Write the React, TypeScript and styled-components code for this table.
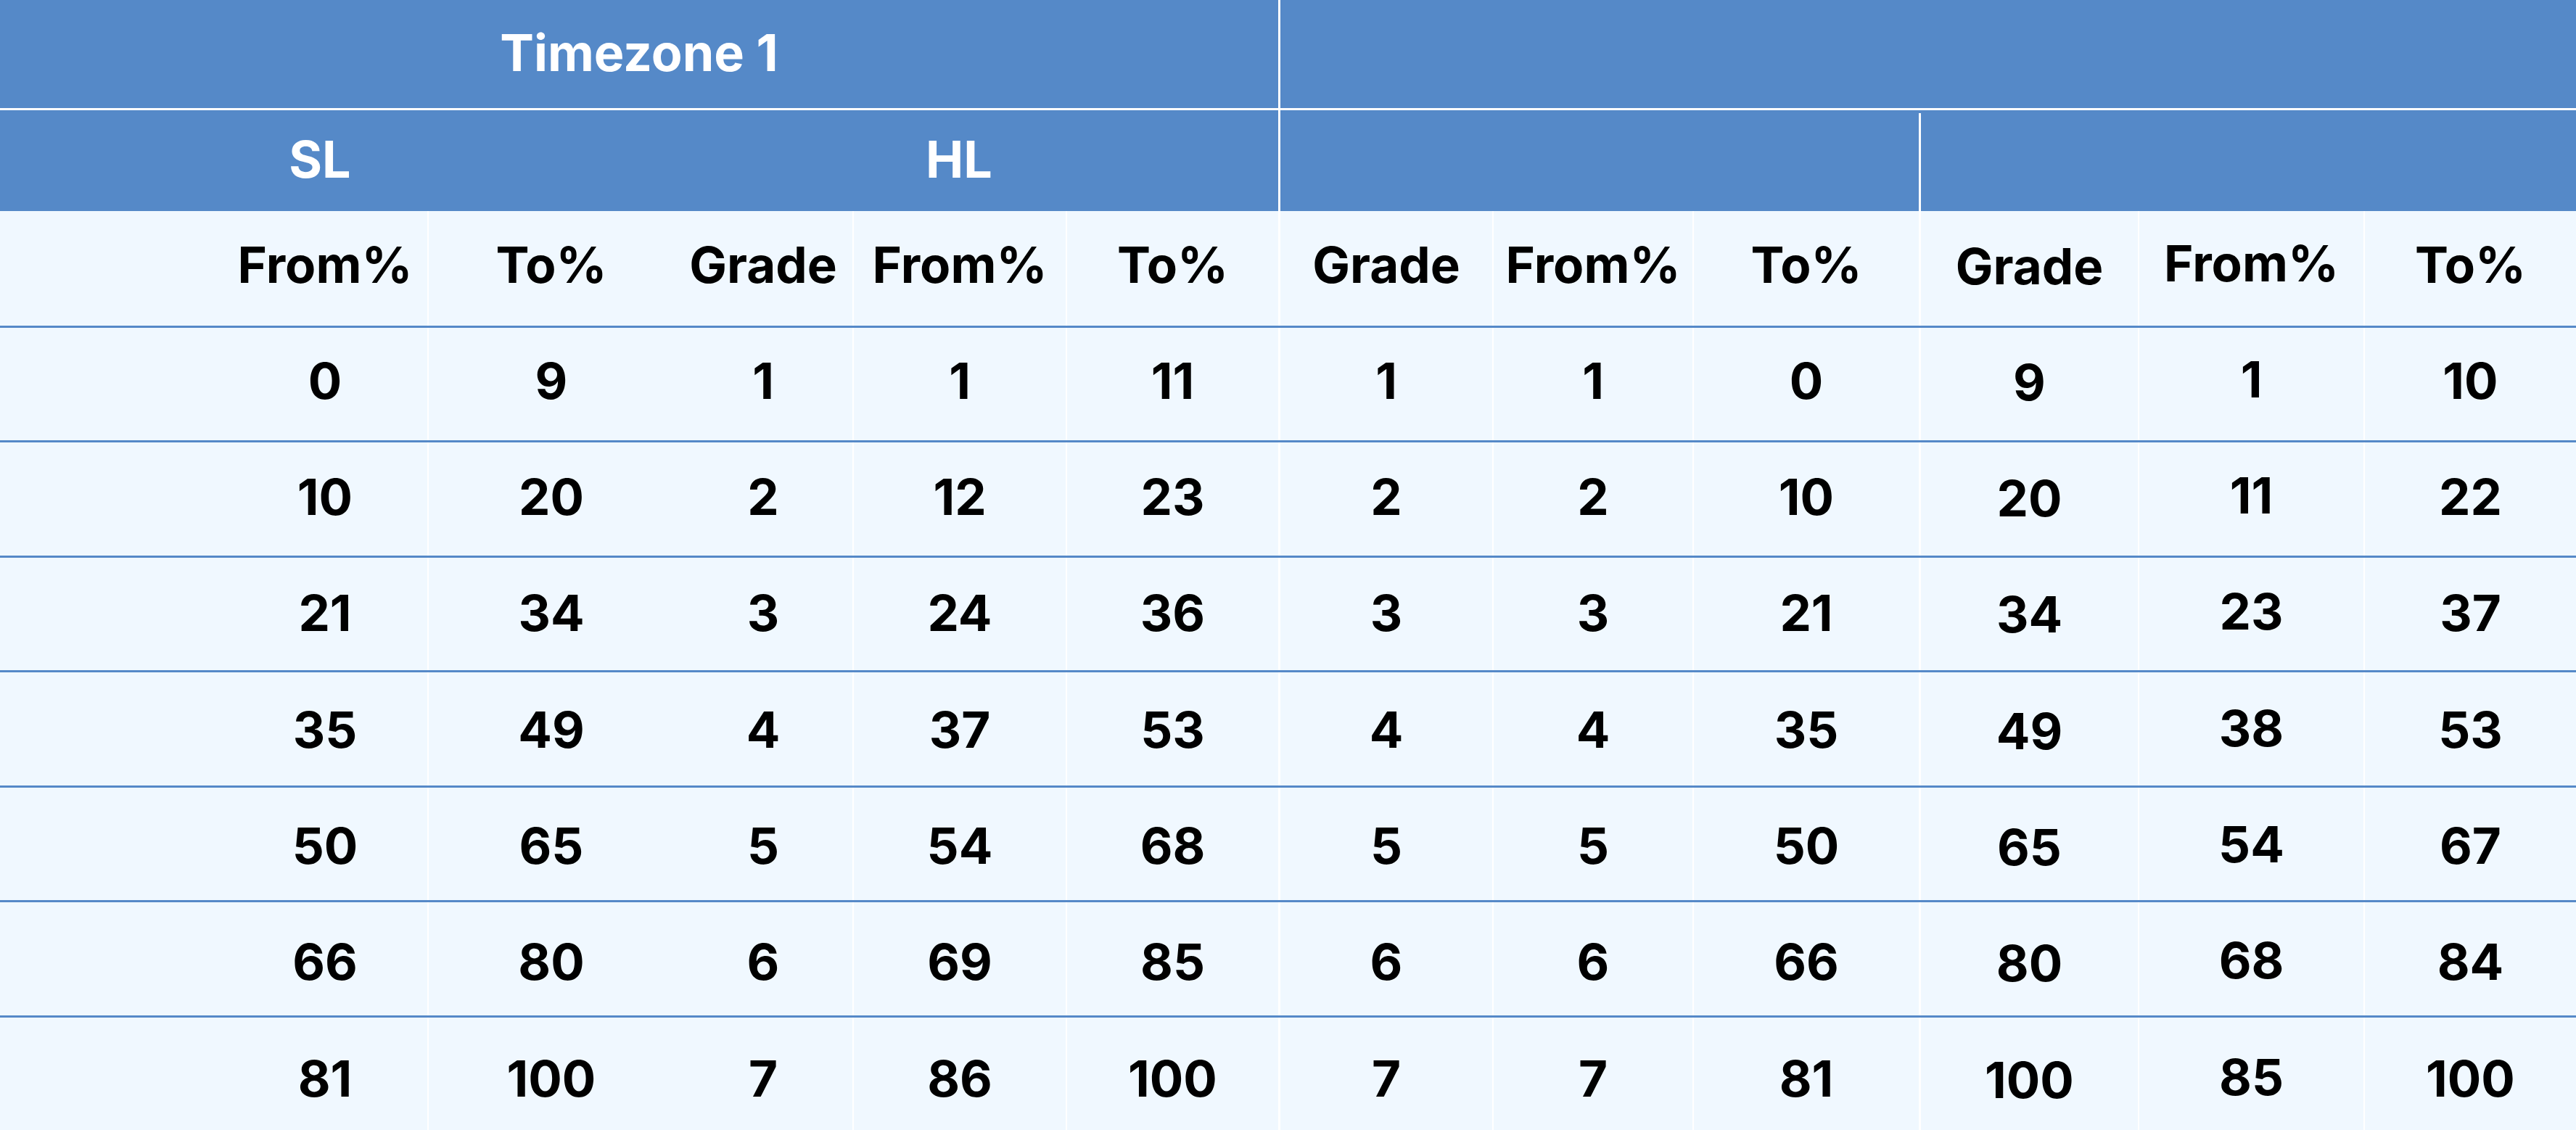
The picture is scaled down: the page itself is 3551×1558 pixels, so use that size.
import styled, { createGlobalStyle } from 'styled-components';

const BLUE = '#5589c8';
const PALE = '#f0f8ff';

const GlobalStyle = createGlobalStyle`
  html, body {
    margin: 0;
    padding: 0;
    background: ${PALE};
  }
  body {
    font-family: Inter, "Noto Sans", "Liberation Sans", sans-serif;
  }
`;

// widths of the twelve body columns, in px
const colWidths = [307, 282, 340, 246, 294, 293, 295, 276, 312, 302, 311, 293];
// left divider thickness per column (0 = none)
const dividers = [0, 0, 2, 0, 2, 2, 3, 2, 2, 3, 2, 2];
// small vertical shift per column, as in the original render
const nudges = [0, 0, 0, 0, 0, 0, 0, 0, 0, 2, -2, 0];

const columns = ['', 'From%', 'To%', 'Grade', 'From%', 'To%', 'Grade', 'From%', 'To%', 'Grade', 'From%', 'To%'];

const rows = [
  ['', '0', '9', '1', '1', '11', '1', '1', '0', '9', '1', '10'],
  ['', '10', '20', '2', '12', '23', '2', '2', '10', '20', '11', '22'],
  ['', '21', '34', '3', '24', '36', '3', '3', '21', '34', '23', '37'],
  ['', '35', '49', '4', '37', '53', '4', '4', '35', '49', '38', '53'],
  ['', '50', '65', '5', '54', '68', '5', '5', '50', '65', '54', '67'],
  ['', '66', '80', '6', '69', '85', '6', '6', '66', '80', '68', '84'],
  ['', '81', '100', '7', '86', '100', '7', '7', '81', '100', '85', '100'],
];

export default function App() {
  return (
    <>
      <GlobalStyle />
      <Table>
        <TopRow>
          <GroupCell>Timezone 1</GroupCell>
          <GroupCell $divider={3} />
        </TopRow>
        <LevelRow>
          <GroupCell>SL</GroupCell>
          <GroupCell>HL</GroupCell>
          <GroupCell $divider={3} />
          <GroupCell $inset={4} />
        </LevelRow>
        <GridRow $height={158}>
          {columns.map((c, i) => (
            <Cell key={i} $divider={dividers[i]} $shift={nudges[i] - 5}>
              {c}
            </Cell>
          ))}
        </GridRow>
        {rows.map((r, ri) => (
          <GridRow key={ri} $height={158.43} $ruled>
            {r.map((v, i) => (
              <Cell key={i} $divider={dividers[i]} $shift={nudges[i] - 5 + ri * 1.9}>
                {v}
              </Cell>
            ))}
          </GridRow>
        ))}
      </Table>
    </>
  );
}

const Table = styled.div`
  width: 3551px;
  display: flex;
  flex-direction: column;
  background: ${PALE};
  color: #000;
  font-weight: 700;
  font-size: 69px;
`;

const TopRow = styled.div`
  display: grid;
  grid-template-columns: 1762px 1789px;
  height: 149px;
  border-bottom: 3px solid #fff;
  font-size: 70px;
`;

const LevelRow = styled.div`
  display: grid;
  grid-template-columns: 882px 880px 883px 906px;
  height: 139px;
  font-size: 70px;
`;

const GroupCell = styled.div<{ $divider?: number; $inset?: number }>`
  display: flex;
  align-items: center;
  justify-content: center;
  background: ${BLUE};
  color: #fff;
  padding-bottom: 4px;
  box-sizing: border-box;
  border-left: ${({ $divider }) => ($divider ? `${$divider}px solid #fff` : 'none')};
  ${({ $inset }) =>
    $inset
      ? `background: linear-gradient(to right, #fff 0 3px, transparent 3px) no-repeat 0 ${$inset}px / 100% 100%, ${BLUE};`
      : ''}
`;

const GridRow = styled.div<{ $height: number; $ruled?: boolean }>`
  display: grid;
  grid-template-columns: ${colWidths.map((w) => `${w}px`).join(' ')};
  height: ${({ $height }) => $height}px;
  box-sizing: border-box;
  border-top: ${({ $ruled }) => ($ruled ? `3px solid ${BLUE}` : 'none')};
`;

// $shift: how far the text sits below the cell's centre, in px
const Cell = styled.div<{ $divider: number; $shift: number }>`
  display: flex;
  align-items: center;
  justify-content: center;
  box-sizing: border-box;
  border-left: ${({ $divider }) => ($divider ? `${$divider}px solid #fff` : 'none')};
  padding-top: ${({ $shift }) => Math.max(0, $shift * 2)}px;
  padding-bottom: ${({ $shift }) => Math.max(0, -$shift * 2)}px;
  white-space: nowrap;
`;
